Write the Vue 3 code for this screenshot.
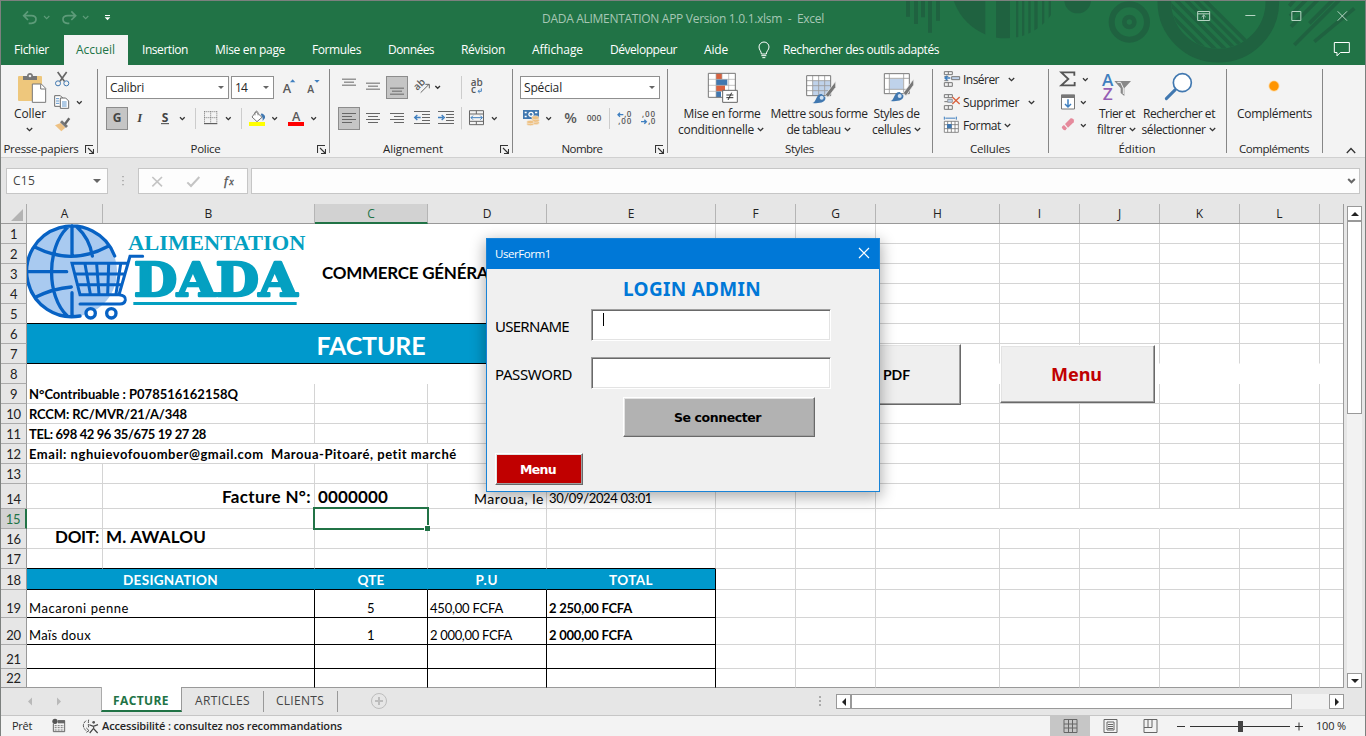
<script setup>
import { h } from 'vue'

// Stretches or tightens a label to its nominal width in pixels.
const vFit = {
  mounted(el, { value }) {
    const n = [...el.textContent].length
    el.style.letterSpacing = (value - el.getBoundingClientRect().width) / n + 'px'
  }
}

// Icon drawn on a 3x grid: the view box decides the rendered size.
const Ic = (props, { slots }) => {
  const [, , w, hh] = props.vb.split(' ').map(Number)
  return h('svg', { class: 'ic', viewBox: props.vb, width: w / 3, height: hh / 3 }, slots.default?.())
}
Ic.props = ['vb']
const Chev = () =>
  h('svg', { class: 'chev', width: 7, height: 5, viewBox: '0 0 7 5' }, [
    h('path', { d: 'M.8 1 3.5 3.7 6.2 1', fill: 'none', stroke: '#333', 'stroke-width': 1.3 })
  ])
const Launch = () =>
  h('svg', { class: 'launch', width: 9, height: 9, viewBox: '0 0 9 9' }, [
    h('path', { d: 'M.5 8V.5H8M3 3l5 5M8.5 4v4.5H4', fill: 'none', stroke: '#333', 'stroke-width': 1.1 })
  ])

const tabs = [
  ['Fichier', 35], ['Accueil', 39], ['Insertion', 46], ['Mise en page', 70], ['Formules', 49],
  ['Données', 46], ['Révision', 44], ['Affichage', 51], ['Développeur', 67], ['Aide', 24]
]

const colW = [76, 212, 113, 119, 169, 80, 80, 124, 80, 80, 80, 80, 24]
const cols = 'ABCDEFGHIJKL'.split('')
const heights = [20, 20, 20, 20, 20, 20, 20, 20, 20, 20, 20, 20, 20, 25, 20, 20, 20, 21, 28, 27, 24, 19]
const sum = (a, b) => colW.slice(a, b).reduce((x, y) => x + y, 0)

// Left block of every row: [columns spanned, classes, text, text width]
const left = {
  1: [[5, 'nb']], 2: [[5, 'nb']], 4: [[5, 'nb']], 5: [[5, 'blk-b']],
  3: [[2, 'nb nr'], [3, 'nb big', 'COMMERCE GÉNÉRAL', 175]],
  6: [[5, 'blue nb']], 7: [[5, 'blue blk-b ctr huge', 'FACTURE', 109]],
  8: [[5, 'nb nr']],
  9: [[2, 'b', 'N°Contribuable : P078516162158Q', 209], [1], [1], [1]],
  10: [[2, 'b', 'RCCM: RC/MVR/21/A/348', 158], [1], [1], [1]],
  11: [[2, 'b', 'TEL: 698 42 96 35/675 19 27 28', 177], [1], [1], [1]],
  12: [[4, 'b', 'Email: nghuievofouomber@gmail.com  Maroua-Pitoaré, petit marché', 428], [1]],
  14: [[1], [1, 'rt lg', 'Facture N°:', 89], [1, 'lg', '0000000', 70], [1, 'rt md', 'Maroua, le', 70], [1, 'dte', '30/09/2024 03:01', 103]],
  15: [[1], [1], [1, 'sel'], [1], [1]],
  16: [[1, 'rt lg', 'DOIT:', 44], [1, 'lg', 'M. AWALOU', 100], [1], [1], [1]],
  17: [[1, 'blk-b'], [1, 'blk-b'], [1, 'blk-b'], [1, 'blk-b'], [1, 'blk-b']],
  18: [[2, 'hd', 'DESIGNATION', 95], [1, 'hd', 'QTE', 27], [1, 'hd', 'P.U', 23], [1, 'hd blk-r', 'TOTAL', 44]],
  19: [[2, 'bk', 'Macaroni penne', 100], [1, 'bk ctr', '5', 8], [1, 'bk', '450,00 FCFA', 73], [1, 'bk b', '2 250,00 FCFA', 83]],
  20: [[2, 'bk', 'Maïs doux', 62], [1, 'bk ctr', '1', 8], [1, 'bk', '2 000,00 FCFA', 82], [1, 'bk b', '2 000,00 FCFA', 83]],
  21: [[2, 'bk'], [1, 'bk'], [1, 'bk'], [1, 'bk']],
  22: [[2, 'bk'], [1, 'bk'], [1, 'bk'], [1, 'bk']]
}
const rows = heights.map((height, i) => {
  const n = i + 1
  const cells = []
  let c = 0
  for (const [span, cls = '', text, tw] of left[n] || [[1], [1], [1], [1], [1]]) {
    cells.push({ w: sum(c, c + span), cls, text, tw })
    c += span
  }
  for (; c < 13; c++) {
    let cls = ''
    if (n === 7) cls = 'nb'
    if (n === 8) cls = 'nb nr'
    if (n === 15 && c >= 7 && c <= 10) cls = 'nr'
    cells.push({ w: colW[c], cls })
  }
  return { n, height, cells }
})
</script>

<template>
  <div class="app">
    <header class="top">
      <svg class="deco" viewBox="0 0 1380 195" width="460" height="65">
        <defs>
          <clipPath id="c1"><circle cx="300" cy="-50" r="165" /></clipPath>
          <clipPath id="c2"><circle cx="937" cy="5" r="141" /></clipPath>
        </defs>
        <path d="M0 0h12v50H0zM24 0h12v72H24zM45 0h12v52H45zM66 0h12v98H66zM90 0h12v62H90z" />
        <path clip-path="url(#c1)" d="M130 0h108v130H130zM270 0h42v130h-42zM330 0h7v130h-7zM348 0h7v130h-7zM367 0h7v130h-7zM385 0h10v130h-10zM408 0h7v130h-7zM428 0h7v130h-7z" />
        <circle cx="515" cy="0" r="40" />
        <g class="ln">
          <circle cx="670" cy="66" r="53" stroke-width="18" />
          <circle cx="670" cy="66" r="15" stroke-width="14" />
          <circle cx="937" cy="5" r="162" stroke-width="41" />
          <path clip-path="url(#c2)" stroke-width="11" d="M780 0 930 150M810 0 960 150M840 0l150 150M868 0l140 140M896 0l140 140M780 30l130 130" />
          <path stroke-width="11" d="M1165 0 1150 18M1200 0 1152 48M1235 0 1155 80M1300 0 1165 135M1345 25 1225 125M1280 0 1210 70" />
        </g>
      </svg>
      <div class="titlebar">
        <Ic vb="3 0 360 96" class="qat">
          <g fill="none" stroke="#5d9b79" stroke-width="5">
            <path d="M84 34 71 47 84 60M72 47H94Q108 47 108 58T94 70H86" />
            <path d="M214 34 227 47 214 60M226 47H204Q189 47 189 58T202 70H208" />
            <path d="M132 48l8 8 8-8M249 48l8 8 8-8" stroke-width="3.5" />
          </g>
          <path d="M315 45h15v3h-15zM314 52h17l-8.500 9z" fill="#fff" />
        </Ic>
        <span class="ttl"><span v-fit="282" class="t">DADA ALIMENTATION APP Version 1.0.1.xlsm&nbsp; -&nbsp; Excel</span></span>
        <Ic vb="860 0 520 96" class="wc">
          <g fill="none" stroke="#b8d6c5" stroke-width="3">
            <path d="M874 34.500h36v27h-36zM874 41.500h36M892 58V46M886 51l6-6 6 6M1017 46.500h30M1156.500 34.500h27v27h-27zM1294 34l28 28M1322 34l-28 28" />
          </g>
        </Ic>
      </div>
      <nav class="tabs">
        <span v-for="(t, i) in tabs" :key="t[0]" class="tab" :class="{ on: i === 1 }"><span v-fit="t[1]" class="t">{{ t[0] }}</span></span>
        <Ic vb="908 105 39 90" class="bulb">
          <path d="M921 162c0-9-7-12-7-21a15 15 0 0 1 30 0c0 9-8 12-8 21zM921 167h15M924 173h9" fill="none" stroke="#fff" stroke-width="3" />
        </Ic>
        <span v-fit="156" class="t">Rechercher des outils adaptés</span>
        <Ic vb="1275 105 72 90" class="cmt">
          <path d="M1285 127.500h45v30h-27l-10 10v-10h-8z" fill="none" stroke="#fff" stroke-width="3" />
        </Ic>
      </nav>
    </header>

    <section class="ribbon">
      <div class="grp g1">
        <div class="body cols">
          <div class="bigbtn w49">
            <Ic vb="3 204 147 114">
              <rect x="54" y="228" width="72" height="75" rx="3" fill="#eec77c" />
              <path d="M69 228h12c0-12 18-12 18 0h12v12H69z" fill="#777" /><circle cx="90" cy="228" r="4" fill="#eee" />
              <path d="M97 252h27l13 13v42H97z" fill="#fff" stroke="#777" stroke-width="3" /><path d="M122 253v14h14" fill="none" stroke="#777" stroke-width="3" />
            </Ic>
            <span v-fit="32" class="t">Coller</span>
            <span class="l2"><Chev /></span>
          </div>
          <div class="stack">
            <Ic vb="150 204 141 69">
              <path d="M173 216l20 28M200 216l-20 28" stroke="#666" stroke-width="5" /><circle cx="174" cy="250" r="7.500" fill="none" stroke="#4178b0" stroke-width="3" /><circle cx="199" cy="250" r="7.500" fill="none" stroke="#4178b0" stroke-width="3" />
            </Ic>
            <Ic vb="150 273 141 69">
              <g fill="#fff" stroke="#6a6a6a" stroke-width="3"><path d="M164 287h17l8 8v24h-25z" /><path d="M181 294h16l9 9v22h-25z" /></g>
              <path d="M168 296h9M168 303h10M168 310h10M186 306h14M186 312h14M186 318h14" stroke="#3f7fbf" stroke-width="2.500" />
              <path d="M231 304l7 7 7-7" fill="none" stroke="#333" stroke-width="4" />
            </Ic>
            <Ic vb="150 342 141 69">
              <path d="M165 376l17-7 14 14-12 11z" fill="#eec183" /><path d="M180 367l6-6 18 17-6 6z" fill="#777" /><path d="M195 372l13-17" stroke="#666" stroke-width="7" />
            </Ic>
          </div>
        </div>
        <div class="lbl"><span class="c"><span v-fit="75" class="t">Presse-papiers</span></span><Launch /></div>
      </div>

      <div class="grp g2">
        <div class="body lines">
          <div class="line pl8">
            <div class="combo cf"><span v-fit="34" class="t">Calibri</span><i class="tri"></i></div>
            <div class="combo cs"><span v-fit="12" class="t">14</span><i class="tri"></i></div>
            <Ic vb="822 229 165 69">
              <text x="848" y="279" font-size="38" class="gl">A</text><path d="M870 248l8-9 8 9z" fill="#3f7fbf" />
              <text x="922" y="279" font-size="31" class="gl">A</text><path d="M943 241l8 8 8-8z" fill="#3f7fbf" />
            </Ic>
          </div>
          <div class="line pl8">
            <div class="press bold">G</div>
            <Ic vb="384 321 201 69">
              <text x="412" y="366" font-size="38" font-style="italic" class="gs">I</text>
              <text x="485" y="366" font-size="36" class="gb">S</text><path d="M483 371h24" stroke="#444" stroke-width="3" />
              <path d="M540 352l7 7 7-7" fill="none" stroke="#333" stroke-width="4" />
            </Ic>
            <Ic vb="585 321 138 69">
              <path d="M586.500 324v63" stroke="#ccc" stroke-width="3" />
              <path d="M613 335h38M613 353h38M613.500 334v34M632 334v34M650.500 334v34" stroke="#777" stroke-width="3" stroke-dasharray="3 3" /><path d="M612 371h40" stroke="#444" stroke-width="3" />
              <path d="M678 352l7 7 7-7" fill="none" stroke="#333" stroke-width="4" />
            </Ic>
            <Ic vb="723 321 264 69">
              <path d="M724.500 324v63" stroke="#ccc" stroke-width="3" />
              <path d="M768 335l18 17-15 13-15-14z" fill="#fff" stroke="#777" stroke-width="3" /><path d="M765 346v-8q5-10 9 0v8" fill="none" stroke="#777" stroke-width="2.500" />
              <path d="M785 340q12 5 10 14l-7 9q1-14-6-18z" fill="#4178b0" /><path d="M747 366h48v12h-48z" fill="#ff0" />
              <path d="M817 352l7 7 7-7M934 352l7 7 7-7" fill="none" stroke="#333" stroke-width="4" />
              <text x="876" y="364" font-size="38" class="gl">A</text><path d="M864 366h48v12h-48z" fill="red" />
            </Ic>
          </div>
        </div>
        <div class="lbl"><span class="c"><span v-fit="30" class="t">Police</span></span><Launch /></div>
      </div>

      <div class="grp g3">
        <div class="body lines">
          <div class="line">
            <Ic vb="990 229 168 69"><path class="al" d="M1026 238.500h42M1032 247.500h30M1026 256.500h42M1098 250.500h42M1104 259.500h30M1098 268.500h42" /></Ic>
            <div class="press"><Ic vb="1161 232 60 63"><path class="al" d="M1170 265.500h42M1176 274.500h30M1170 283.500h42" /></Ic></div>
            <Ic vb="1224 229 156 69">
              <text x="0" y="0" font-size="30" class="gl" transform="translate(1252 274) rotate(-45)">ab</text>
              <path d="M1262 279l25-25M1276 254h12v12" fill="none" stroke="#666" stroke-width="3" />
              <path d="M1306 259l7 7 7-7" fill="none" stroke="#333" stroke-width="4" />
            </Ic>
            <Ic vb="15 229 152 69">
              <path d="M19.500 229v69" stroke="#ccc" stroke-width="3" />
              <text x="47" y="260" font-size="30" class="gl">ab</text><text x="48" y="281" font-size="30" class="gl">c</text>
              <path d="M79 266v9h-9M74 270l-5 5 5 5" fill="none" stroke="#3f7fbf" stroke-width="3" />
            </Ic>
          </div>
          <div class="line">
            <Ic vb="990 321 24 69" />
            <div class="press"><Ic vb="1017 324 60 63"><path class="al" d="M1026 340.500h42M1026 349.500h30M1026 358.500h42M1026 367.500h30" /></Ic></div>
            <Ic vb="1080 321 300 69">
              <path class="al" d="M1098 340.500h42M1104 349.500h30M1098 358.500h42M1104 367.500h30M1170 340.500h42M1182 349.500h30M1170 358.500h42M1182 367.500h30M1242 334.500h48M1266 343.500h24M1266 352.500h24M1266 361.500h24M1242 370.500h48M1314 334.500h48M1338 343.500h24M1338 352.500h24M1338 361.500h24M1314 370.500h48" />
              <path d="M1262 352.500h-15M1252 345l-8 7.500 8 7.500M1314 352.500h15M1325 345l8 7.500-8 7.500" fill="none" stroke="#3f7fbf" stroke-width="4" />
            </Ic>
            <Ic vb="15 321 152 69">
              <path d="M19.500 321v67" stroke="#ccc" stroke-width="3" />
              <path d="M43.500 332h42v42h-42zM43 342h42M43 364h42M64 332v10M64 364v10" fill="none" stroke="#666" stroke-width="3" />
              <path d="M48 353h34M54 347l-6 6 6 6M76 347l6 6-6 6" fill="none" stroke="#3f7fbf" stroke-width="3" />
              <path d="M111 352l7 7 7-7" fill="none" stroke="#333" stroke-width="4" />
            </Ic>
          </div>
        </div>
        <div class="lbl"><span class="c"><span v-fit="60" class="t">Alignement</span></span><Launch /></div>
      </div>

      <div class="grp g4">
        <div class="body lines">
          <div class="line pl7"><div class="combo cn"><span v-fit="38" class="t">Spécial</span><i class="tri"></i></div></div>
          <div class="line">
            <Ic vb="174 321 123 69">
              <path d="M204 330h48v27h-48z" fill="#4178b0" /><circle cx="228" cy="343" r="8" fill="#fff" /><circle cx="228" cy="343" r="4" fill="#4178b0" /><path d="M209 335h6v5h-6zM240 335h7v5h-7zM209 347h6v5h-6z" fill="#fff" />
              <g fill="#eec183" stroke="#f3f3f3" stroke-width="1.5"><ellipse cx="240" cy="368" rx="13" ry="6" /><ellipse cx="241" cy="361" rx="12" ry="6" /><ellipse cx="241" cy="353" rx="11" ry="6" /><ellipse cx="226" cy="372" rx="11" ry="5" /><ellipse cx="226" cy="366" rx="11" ry="5" /></g>
              <path d="M274 352l7 7 7-7" fill="none" stroke="#333" stroke-width="4" />
            </Ic>
            <Ic vb="297 321 165 69">
              <text x="328" y="370" font-size="42" textLength="38" lengthAdjust="spacingAndGlyphs" class="gl">%</text>
              <text x="395" y="363" font-size="29" textLength="44" lengthAdjust="spacingAndGlyphs" class="gl">000</text>
            </Ic>
            <Ic vb="462 321 174 69">
              <path d="M463.500 324v63" stroke="#ccc" stroke-width="3" />
              <text x="508" y="351" font-size="24" class="gl" textLength="21">,0</text><text x="490" y="372" font-size="24" class="gl" textLength="39">,00</text>
              <text x="561" y="351" font-size="24" class="gl" textLength="39">,00</text><text x="580" y="372" font-size="24" class="gl" textLength="21">,0</text>
              <path d="M505 344h-15M495 338l-6 6 6 6M558 365h15M568 359l6 6-6 6" fill="none" stroke="#3f7fbf" stroke-width="4" />
            </Ic>
          </div>
        </div>
        <div class="lbl"><span class="c"><span v-fit="41" class="t">Nombre</span></span><Launch /></div>
      </div>

      <div class="grp g5">
        <div class="body cols">
          <div class="bigbtn w100">
            <Ic vb="639 204 300 114">
              <path d="M760 220h81v72h-81z" fill="#fff" /><path d="M783 220h18v18h-18zM783 256h27v18h-27z" fill="#d9623f" /><path d="M783 238h34v18h-34zM783 274h15v18h-15z" fill="#4178b0" />
              <path d="M760 238h81M760 256h81M760 274h81M783 220v72M801 220v18M821 220v72" stroke="#aaa" stroke-width="2" fill="none" /><path d="M760 220h81v72h-81z" fill="none" stroke="#777" stroke-width="3" />
              <path d="M803 271h44v36h-44z" fill="#fff" stroke="#666" stroke-width="3" /><path d="M814 285h21M814 293h21M830 278l-11 22" stroke="#333" stroke-width="3" />
            </Ic>
            <span class="r7"><span v-fit="77" class="t">Mise en forme</span></span>
            <span class="l2 r6"><span v-fit="76" class="t">conditionnelle</span><Chev /></span>
          </div>
          <div class="bigbtn w102">
            <Ic vb="939 204 306 114">
              <path d="M1055 227h72v60h-72z" fill="#fff" /><path d="M1073 242h54v45h-54z" fill="#bfd2ea" />
              <path d="M1055 242h72M1055 257h72M1055 272h72M1073 227v60M1091 227v60M1109 227v60" stroke="#999" stroke-width="2.500" /><path d="M1055 227h72v60h-72z" fill="none" stroke="#777" stroke-width="3" />
              <path d="M1111 284l31-40v18l-23 30z" fill="#777" stroke="#f3f3f3" stroke-width="2" /><path d="M1072 309c14-2 9-27 28-27l11 10c3 16-18 19-39 17z" fill="#4178b0" /><circle cx="1100" cy="293" r="6" fill="#cfe0f2" />
            </Ic>
            <span v-fit="97" class="t">Mettre sous forme</span>
            <span class="l2"><span v-fit="54" class="t">de tableau</span><Chev /></span>
          </div>
          <div class="bigbtn w62">
            <Ic vb="1245 204 186 114">
              <path d="M1288 221h75v60h-75z" fill="#fff" stroke="#777" stroke-width="3" /><path d="M1304 237h40v30h-40z" fill="#bfd2ea" /><path d="M1288 235h75M1288 268h75M1303 221v60M1346 221v60" stroke="#999" stroke-width="2.500" />
              <path d="M1345 279l31-42v18l-23 32z" fill="#777" stroke="#f3f3f3" stroke-width="2" /><path d="M1306 303c14-2 9-27 28-27l11 10c3 16-18 19-39 17z" fill="#4178b0" /><circle cx="1334" cy="288" r="6" fill="#cfe0f2" />
            </Ic>
            <span class="k8"><span v-fit="46" class="t">Styles de</span></span>
            <span class="l2 k8"><span v-fit="39" class="t">cellules</span><Chev /></span>
          </div>
        </div>
        <div class="lbl"><span class="c"><span v-fit="29" class="t">Styles</span></span></div>
      </div>

      <div class="grp g6">
        <div class="body stack">
          <div class="cmd">
            <Ic vb="81 204 90 69">
              <path d="M115 215h24v9h-24zM115 248h24v11h-24zM127 215v9M127 248v11M115 230h12M115 242h12" fill="none" stroke="#777" stroke-width="3" /><path d="M137 230h24v9h-24z" fill="#bfd2ea" stroke="#777" stroke-width="3" /><path d="M133 234h-15M124 227l-7 7 7 7" fill="none" stroke="#3f7fbf" stroke-width="4" />
            </Ic>
            <span v-fit="36" class="t">Insérer</span><Chev class="a9" />
          </div>
          <div class="cmd">
            <Ic vb="81 273 90 69">
              <path d="M115 284h24v9h-24zM115 317h24v11h-24zM127 284v9M127 317v11M115 305h10" fill="none" stroke="#777" stroke-width="3" /><path d="M125 298h14v9h-14z" fill="#bfd2ea" stroke="#777" stroke-width="2" /><path d="M139 291l22 21M161 291l-22 21" stroke="#d9623f" stroke-width="4" />
            </Ic>
            <span v-fit="56" class="t">Supprimer</span><Chev class="a9" />
          </div>
          <div class="cmd">
            <Ic vb="81 342 90 69">
              <path d="M115 364h42v33h-42zM115 374h42M115 386h42M125 364v33M136 364v33M147 364v33" fill="#fff" stroke="#777" stroke-width="2.500" /><path d="M123 372h14v13h-14z" fill="#4178b0" /><path d="M115 350v9M151 350v9M118 354.500h30" stroke="#3f7fbf" stroke-width="3" />
            </Ic>
            <span v-fit="38" class="t">Format</span><Chev class="a3" />
          </div>
        </div>
        <div class="lbl"><span class="c"><span v-fit="40" class="t">Cellules</span></span></div>
      </div>

      <div class="grp g7">
        <div class="body cols">
          <div class="stack">
            <Ic vb="429 204 138 69"><path d="M505 227v-10h-39l21 20-21 19h40v-10" fill="none" stroke="#555" stroke-width="5.500" /><path d="M531 235l7 7 7-7" fill="none" stroke="#333" stroke-width="4" /></Ic>
            <Ic vb="429 273 138 69"><path d="M466.500 285h39v42h-39z" fill="#fff" stroke="#777" stroke-width="3" /><path d="M465 284h42v10h-42z" fill="#777" /><path d="M486 298v22M477 312l9 9 9-9" fill="none" stroke="#3f7fbf" stroke-width="4.500" /><path d="M525 304l7 7 7-7" fill="none" stroke="#333" stroke-width="4" /></Ic>
            <Ic vb="429 342 138 69"><path d="M477 372l17-17q4-2 8 3t1 9l-17 16z" fill="#e58a9c" /><path d="M474 375l9 10-4 5q-4 2-9-3t-1-8z" fill="#e58a9c" /><path d="M525 373l7 7 7-7" fill="none" stroke="#333" stroke-width="4" /></Ic>
          </div>
          <div class="bigbtn w44">
            <Ic vb="567 204 132 114"><text x="588" y="258" font-size="46" textLength="34" lengthAdjust="spacingAndGlyphs" fill="#3f7fbf" class="az">A</text><text x="590" y="299" font-size="46" textLength="30" lengthAdjust="spacingAndGlyphs" fill="#955fb5" class="az">Z</text><path d="M625 243h50l-20 22v23l-11-9v-14z" fill="#888" /><path d="M634 247h10l8 17v18" fill="none" stroke="#f3f3f3" stroke-width="3" /></Ic>
            <span v-fit="36" class="t">Trier et</span>
            <span class="l2"><span v-fit="29" class="t">filtrer</span><Chev /></span>
          </div>
          <div class="bigbtn w80">
            <Ic vb="699 204 240 114"><path d="M781 296l27-27" stroke="#4178b0" stroke-width="9" stroke-linecap="round" /><circle cx="829" cy="248" r="27" fill="#fff" stroke="#4178b0" stroke-width="5" /></Ic>
            <span v-fit="72" class="t">Rechercher et</span>
            <span class="l2"><span v-fit="64" class="t">sélectionner</span><Chev /></span>
          </div>
        </div>
        <div class="lbl"><span class="c"><span v-fit="37" class="t">Édition</span></span></div>
      </div>

      <div class="grp g8">
        <div class="body cols">
          <div class="bigbtn w95">
            <Ic vb="963 204 285 114"><circle cx="1104" cy="258" r="16.500" fill="#ffd699" /><circle cx="1104" cy="258" r="14" fill="#ff9500" /></Ic>
            <span v-fit="75" class="t">Compléments</span>
          </div>
        </div>
        <div class="lbl"><span class="c"><span v-fit="70" class="t">Compléments</span></span></div>
      </div>
      <svg class="collapse" width="10" height="7" viewBox="0 0 10 7"><path d="M.8 6 5 1.500 9.200 6" fill="none" stroke="#333" stroke-width="1.300" /></svg>
    </section>

    <section class="fbar">
      <div class="fbox nm"><span v-fit="22" class="t">C15</span><i class="tri"></i></div>
      <Ic vb="324 25 90 78"><path d="M367 49h4v4h-4zM367 61h4v4h-4zM367 73h4v4h-4z" fill="#999" /></Ic>
      <div class="fbox fn">
        <Ic vb="417 27 324 72">
          <path d="M457 51l29 28M486 51l-29 28" stroke="#c4c4c4" stroke-width="5" /><path d="M562 67l11 11 25-27" fill="none" stroke="#c4c4c4" stroke-width="6" />
          <text x="672" y="74" font-size="40" class="fx">f</text><text x="688" y="76" font-size="30" class="fx">x</text>
        </Ic>
      </div>
      <div class="fbox fm"><svg width="9" height="6" viewBox="0 0 9 6"><path d="M1.200 1 4.500 4.300 7.800 1" fill="none" stroke="#666" stroke-width="2" /></svg></div>
    </section>

    <section class="work">
      <div class="sheet">
        <div class="hrow">
          <div class="corner"><i></i></div>
          <div v-for="(c, i) in cols" :key="c" class="hc" :class="{ on: c === 'C' }" :style="{ width: colW[i] + 'px' }">{{ c }}</div>
        </div>
        <div v-for="r in rows" :key="r.n" class="row" :style="{ height: r.height + 'px' }">
          <div class="rh" :class="{ on: r.n === 15 }">{{ r.n }}</div>
          <div v-for="(c, i) in r.cells" :key="i" class="cell" :class="c.cls" :style="{ width: c.w + 'px' }">
            <span v-if="c.text" v-fit="c.tw" class="t">{{ c.text }}</span>
          </div>
        </div>

        <svg class="logo" viewBox="81 192 840 294" width="280" height="98">
          <circle cx="216" cy="335" r="135" fill="#a9caf0" />
          <g fill="none" stroke="#0762c4" stroke-width="10" stroke-linecap="round">
            <path d="M344 288A136 136 0 1 0 240 468M216 197v90M216 398v72M202 203C140 262 138 408 202 468M230 200C258 225 272 255 277 288M84 335H200M106 262Q216 318 326 258M106 412Q160 385 214 381" />
            <path d="M428 289H390L357 404H240L216 310H383M357 404Q378 406 376 420 374 432 360 432H240M255 312l16 90M290 312l7 90M326 312l-3 90M362 312l-14 90M224 342H373M232 374H364" stroke-width="9" />
            <circle cx="272" cy="460" r="14" fill="#fff" /><circle cx="334" cy="460" r="14" fill="#fff" />
          </g>
          <text x="384" y="269" textLength="532" lengthAdjust="spacingAndGlyphs" class="lg1">ALIMENTATION</text>
          <text x="402" y="409" textLength="490" lengthAdjust="spacingAndGlyphs" class="lg2">DADA</text>
          <path d="M400 426h490v9H400z" fill="#04a0c1" />
        </svg>
        <div class="obj pdf"><span v-fit="27" class="t">PDF</span></div>
        <div class="obj menu"><span v-fit="51" class="t">Menu</span></div>
        <div class="pick"></div>
      </div>
      <div class="vs">
        <div class="sb"><i class="up"></i></div>
        <div class="vthumb"></div>
        <div class="vtrack"></div>
        <div class="sb"><i class="dn"></i></div>
      </div>
    </section>

    <section class="sheets">
      <svg class="nav" width="100" height="26" viewBox="0 0 100 26"><path d="M31 9.500v8l-4-4zM56 9.500v8l4-4z" fill="#b9b9b9" /></svg>
      <div class="st on"><span v-fit="56" class="t">FACTURE</span></div>
      <div class="st s2"><span v-fit="55" class="t">ARTICLES</span></div>
      <div class="st s3"><span v-fit="48" class="t">CLIENTS</span></div>
      <svg class="plus" width="18" height="18" viewBox="0 0 18 18"><circle cx="9" cy="9" r="7.500" fill="none" stroke="#bdbdbd" /><path d="M5 9h8M9 5v8" stroke="#bdbdbd" stroke-width="2" /></svg>
      <svg class="dots" width="4" height="14" viewBox="0 0 4 14"><path d="M1 2h2v2H1zM1 6h2v2H1zM1 10h2v2H1z" fill="#aaa" /></svg>
      <div class="hsb">
        <div class="sb"><i class="lf"></i></div>
        <div class="hthumb"></div>
        <div class="htrack"></div>
        <div class="sb"><i class="rg"></i></div>
      </div>
    </section>

    <footer class="status">
      <span v-fit="20" class="t pr">Prêt</span>
      <Ic vb="135 648 171 60">
        <path d="M160 671v24h34v-33h-20" fill="none" stroke="#666" stroke-width="3" /><path d="M174 661h21v9h-21z" fill="#666" /><circle cx="165" cy="664" r="8" fill="#555" /><path d="M164 677h28M164 683h28M164 690h28" stroke="#777" stroke-width="3" stroke-dasharray="6 3" />
        <path d="M258 662q-16 14 0 30M266 659q-2 12 0 24" fill="none" stroke="#555" stroke-width="3" stroke-dasharray="10 3" /><path d="M259 684l8 8-8 5" fill="none" stroke="#555" stroke-width="3" />
        <circle cx="281" cy="667" r="4" fill="#555" /><path d="M268 674l12 5 14-5M281 678v8l12 13M280 686l-11 13" fill="none" stroke="#444" stroke-width="3.500" />
      </Ic>
      <span v-fit="240" class="t acc">Accessibilité : consultez nos recommandations</span>
      <div class="right">
        <div class="vw on"><svg width="15" height="14" viewBox="0 0 15 14"><path d="M1 .5h13v13H1zM1 5h13M1 9h13M5.500 0v14M9.500 0v14" /></svg></div>
        <div class="vw"><svg width="15" height="14" viewBox="0 0 15 14"><path d="M1 .5h13v13H1zM4 3h7v8H4zM5 5.500h5M5 7.500h5M5 9.500h5" /></svg></div>
        <div class="vw"><svg width="15" height="14" viewBox="0 0 15 14"><path d="M1 .5h13v13H1zM1 8.500h8v-8M5 .5v8" /></svg></div>
        <svg class="zoom" width="137" height="20" viewBox="1170 716 137 20"><path d="M1177 726.500h8M1190 726.500h100M1295 726.500h8M1299 722.500v8" stroke="#333" fill="none" /><path d="M1238 721h5v11h-5z" fill="#444" /></svg>
        <span v-fit="30" class="t">100 %</span>
      </div>
    </footer>

    <div class="dlg">
      <div class="dt"><span v-fit="56" class="t">UserForm1</span><svg width="12" height="12" viewBox="0 0 12 12"><path d="M1 1l10 10M11 1 1 11" stroke="#fff" stroke-width="1.200" /></svg></div>
      <div class="dh"><span v-fit="138" class="t">LOGIN ADMIN</span></div>
      <div class="fld f1"><label><span v-fit="74" class="t">USERNAME</span></label><div class="inp"><i class="caret"></i></div></div>
      <div class="fld"><label><span v-fit="77" class="t">PASSWORD</span></label><div class="inp"></div></div>
      <div class="btn go"><span v-fit="87" class="t">Se connecter</span></div>
      <div class="btn mn"><span v-fit="36" class="t">Menu</span></div>
    </div>
  </div>
</template>

<style>
html, body { margin: 0; overflow: hidden; }
</style>

<style scoped>
.app { position: relative; box-sizing: border-box; width: 1366px; height: 736px; border: 1px solid #7c807e; border-bottom: 0; background: #e6e6e6; font: 12px/16px "Open Sans", "Noto Sans", sans-serif; color: #262626; overflow: hidden; display: flex; flex-direction: column; }
.app * { box-sizing: border-box; }
.t { display: inline-block; white-space: pre; flex: none; }
.ic, svg { display: block; flex: none; }

.top { position: relative; height: 64px; background: #217346; color: #fff; flex: none; }
.deco { position: absolute; right: -1px; top: -1px; fill: #1f6240; }
.deco .ln { fill: none; stroke: #1f6240; }
.titlebar { position: relative; height: 34px; display: flex; }
.titlebar .ic { margin-top: -1px; }
.ttl { width: 847px; padding: 10px 0 0 421px; color: #a6c7b5; }
.wc { margin-left: auto; }
.titlebar .wc { margin-right: -1px; }
.tabs { position: relative; height: 30px; display: flex; align-items: center; gap: 27px; padding-left: 13px; }
.tab.on { background: #f3f3f3; color: #217346; height: 30px; padding: 7px 13px 0 12px; margin: 0 -13px 0 -12px; }
.bulb { margin: 0 6px 0 2px; }
.bulb + .t { margin-left: -20px; }
.cmt { margin: 0 10px 0 auto; }

.ribbon { height: 93px; flex: none; display: flex; background: #f3f3f3; border-bottom: 1px solid #d0d0d0; }
.grp { height: 92px; display: flex; flex-direction: column; position: relative; }
.grp::after { content: ""; position: absolute; right: 0; top: 4px; width: 1px; height: 84px; background: #868686; }
.g1 { width: 97px; } .g2 { width: 232px; } .g3 { width: 183px; } .g4 { width: 155px; }
.g5 { width: 265px; } .g6 { width: 116px; } .g7 { width: 178px; } .g8 { width: 96px; }
.body { height: 76px; padding-top: 3px; }
.cols { display: flex; }
.stack { display: flex; flex-direction: column; }
.lines { display: flex; flex-direction: column; gap: 8px; padding-top: 11px; }
.line { display: flex; height: 23px; }
.pl8 { padding-left: 8px; } .pl7 { padding-left: 7px; }
.lbl { display: flex; height: 16px; font-size: 11.5px; }
.lbl .c { flex: 1; display: flex; justify-content: center; }
.g5 .c, .g6 .c, .g7 .c, .g8 .c { padding-right: 2px; }
.launch { margin: 4px 4px 0 4px; }
.bigbtn { display: flex; flex-direction: column; align-items: center; }
.w49 { width: 49px; } .w100 { width: 100px; } .w102 { width: 102px; } .w62 { width: 62px; }
.w44 { width: 44px; } .w80 { width: 80px; } .w95 { width: 95px; }
.w49 > .t { margin-right: -9px; }
.l2 { display: flex; align-items: center; gap: 3px; height: 15px; padding-right: 1px; }
.w49 .l2 { margin-right: -9px; }
.r7 { padding-left: 8px; } .r6 { padding-left: 7px; } .k8 { padding-right: 9px; }
.cmd { display: flex; align-items: center; height: 23px; }
.a9 { margin-left: 9px; } .a3 { margin-left: 3px; }
.combo { background: #fff; border: 1px solid #8f8f8f; display: flex; align-items: center; padding: 0 4px 0 3px; height: 23px; }
.tri { margin-left: auto; border: 3px solid transparent; border-top: 3px solid #666; border-bottom: 0; }
.cf { width: 123px; margin-right: 2px; } .cs { width: 43px; } .cn { width: 140px; }
.press { width: 22px; height: 23px; border: 1px solid #8c8c8c; background: #c5c5c5; flex: none; }
.bold { font: bold 12px/20px "Open Sans", sans-serif; text-align: center; color: #444; }
.gl { font-family: "Open Sans", sans-serif; font-weight: 600; fill: #595959; }
.gb { font-family: "Open Sans", sans-serif; font-weight: 700; fill: #444; }
.gs { font-family: "Liberation Serif", serif; font-weight: 700; fill: #444; }
.az { font-family: "Open Sans", sans-serif; font-weight: 600; }
.al { fill: none; stroke: #666; stroke-width: 3; }
.collapse { margin: 82px 0 0 23px; }

.fbar { height: 46px; flex: none; display: flex; padding: 10px 0 0 5px; }
.fbox { height: 26px; background: #fdfdfd; border: 1px solid #c6c6c6; display: flex; align-items: center; }
.nm { width: 102px; padding: 0 6px; color: #444; }
.nm .tri { border-width: 4px 4px 0; }
.fn { width: 110px; margin-right: 3px; }
.fm { width: 1109px; justify-content: flex-end; padding-right: 3px; }
.fx { font-family: "Liberation Serif", serif; font-style: italic; font-weight: 400; fill: #555; stroke: #555; }

.work { height: 484px; flex: none; display: flex; }
.sheet { position: relative; width: 1343px; background: #fff; overflow: hidden; font-family: Lato, "Open Sans", sans-serif; color: #000; font-size: 13px; border-right: 1px solid #9b9b9b; }
.hrow { display: flex; height: 20px; background: #e6e6e6; border-bottom: 1px solid #999; font: 12px/19px "Open Sans", sans-serif; color: #222; }
.corner { width: 26px; padding: 5px 3px 0 10px; border-right: 1px solid #ababab; }
.corner i { display: block; border-left: 12px solid transparent; border-bottom: 12px solid #b3b3b3; }
.hc { border-right: 1px solid #b5b5b5; text-align: center; height: 19px; }
.hc.on { background: #d2d2d2; color: #217346; height: 20px; border-bottom: 2px solid #217346; }
.row { display: flex; }
.rh { width: 26px; flex: none; background: #e6e6e6; border-right: 1px solid #999; border-bottom: 1px solid #ababab; display: flex; align-items: flex-end; justify-content: center; line-height: 18px; font-size: 13px; letter-spacing: -.3px; color: #222; }
.rh.on { background: #d2d2d2; color: #217346; border-right: 2px solid #217346; }
.cell { flex: none; border-right: 1px solid #d4d4d4; border-bottom: 1px solid #d4d4d4; display: flex; align-items: flex-end; padding-left: 2px; line-height: 18px; }
.nr { border-right-color: transparent; } .nb { border-bottom-color: transparent; }
.blk-b { border-bottom-color: #000; } .blk-r { border-right-color: #000; }
.blue { background: #0099cc; } .cell.blue.nb { border-bottom-color: #0099cc; }
.b { font-weight: 700; }
.ctr { justify-content: center; padding-left: 0; }
.rt { justify-content: flex-end; padding-right: 2px; }
.big { font-weight: 700; font-size: 17px; padding-left: 7px; line-height: 20px; }
.huge { font-weight: 700; font-size: 25px; color: #fff; line-height: 36px; }
.lg { font-weight: 700; font-size: 17px; line-height: 22px; padding-left: 3px; }
.lg.rt { padding-right: 3px; }
.md { font-size: 14px; line-height: 19px; }
.dte { line-height: 20px; }
.hd { background: #0099cc; color: #fff; font-weight: 700; font-size: 13.5px; border-bottom-color: #000; justify-content: center; padding-left: 0; }
.hd:not(.blk-r) { border-right-color: #0099cc; }
.bk { border-color: #000; }
.row:nth-child(23) .cell, .row:nth-child(23) .rh { border-bottom-color: #999; }
.logo { position: absolute; left: 26px; top: 20px; }
.lg1 { font: 700 66px "Liberation Serif", serif; fill: #04a0c1; }
.lg2 { font: 700 142px "DejaVu Serif", serif; fill: #04a0c1; stroke: #04a0c1; stroke-width: 8; stroke-linejoin: round; }
.obj { position: absolute; background: #efefef; border: 1px solid #fff; border-right: 1px solid #696969; border-bottom: 1px solid #696969; box-shadow: inset -1px -1px #a0a0a0, inset 1px 1px #e3e3e3; display: flex; align-items: center; font-weight: 700; }
.pdf { left: 800px; top: 140px; width: 160px; height: 61px; padding-left: 81px; font-size: 14px; }
.menu { left: 999px; top: 141px; width: 155px; height: 58px; justify-content: center; color: #c00000; font: 700 18px "Noto Sans", sans-serif; padding-right: 2px; }
.pick { position: absolute; left: 312px; top: 303px; width: 116px; height: 23px; border: 2px solid #217346; }
.pick::after { content: ""; position: absolute; right: -3px; bottom: -3px; width: 5px; height: 5px; background: #217346; border: 1px solid #fff; border-right: 0; border-bottom: 0; box-sizing: content-box; }
.vs { margin: 2px 0 0 3px; width: 15px; display: flex; flex-direction: column; height: 482px; }
.sb { width: 15px; height: 15px; border: 1px solid #999; background: #fff; display: flex; align-items: center; justify-content: center; flex: none; }
.vthumb { height: 193px; border: 1px solid #999; background: #fff; }
.vtrack { flex: 1; background: #f2f2f2; }
.up { border: 4px solid transparent; border-bottom-color: #222; border-top: 0; }
.dn { border: 4px solid transparent; border-top-color: #222; border-bottom: 0; }
.lf { border: 4px solid transparent; border-right-color: #222; border-left: 0; }
.rg { border: 4px solid transparent; border-left-color: #222; border-right: 0; }

.sheets { height: 27px; flex: none; display: flex; position: relative; }
.st { height: 21px; margin-top: 3px; color: #444; border-right: 1px solid #999; padding: 2px 0 0 13px; }
.st.on { margin-top: -1px; width: 81px; height: 25px; padding: 6px 0 0 11px; background: #fff; color: #217346; font-weight: 700; border-left: 1px solid #ababab; border-bottom: 2px solid #217346; }
.s2 { width: 82px; } .s3 { width: 74px; padding-left: 12px; }
.plus { margin: 4px 0 0 32px; }
.dots { margin: 6px 0 0 430px; }
.hsb { margin: 6px 0 0 14px; width: 508px; height: 15px; display: flex; }
.hthumb { width: 441px; border: 1px solid #999; background: #fff; }
.htrack { flex: 1; background: #f2f2f2; }

.status { height: 21px; flex: none; border-top: 1px solid #c6c6c6; background: #f3f3f3; display: flex; align-items: center; font-size: 11px; }
.pr { margin-left: 11px; }
.pr + .ic { margin-left: 13px; }
.acc { font-weight: 600; }
.right { margin-left: auto; display: flex; align-items: center; height: 20px; padding-right: 19px; }
.vw { width: 40px; height: 20px; display: flex; align-items: center; justify-content: center; }
.vw.on { background: #c6c6c6; }
.vw svg { fill: none; stroke: #666; stroke-width: 1; }
.zoom { margin-right: 9px; }

.dlg { position: absolute; left: 485px; top: 237px; width: 394px; height: 254px; background: #f0f0f0; border: 1px solid #1883d7; box-shadow: 0 4px 14px 1px rgba(0, 0, 0, .33); display: flex; flex-direction: column; color: #000; font-family: "Noto Sans", "Open Sans", sans-serif; }
.dt { height: 30px; background: #0078d7; color: #fff; display: flex; align-items: center; justify-content: space-between; padding: 0 9px 2px 8px; font: 11.5px "Open Sans", sans-serif; flex: none; }
.dh { height: 40px; padding-left: 136px; color: #0078d7; font: bold 19px/40px "Noto Sans", "Open Sans", sans-serif; }
.fld { display: flex; height: 31px; padding-left: 8px; margin-bottom: 8px; font-size: 15px; line-height: 34px; }
.f1 { margin-bottom: 17px; }
.fld label { width: 96px; }
.inp { width: 240px; height: 32px; background: #fff; border: 1px solid #a0a0a0; border-right-color: #fff; border-bottom-color: #fff; box-shadow: inset 1px 1px #696969, inset -1px -1px #e3e3e3; padding: 3px 0 0 11px; }
.caret { display: block; width: 1px; height: 13px; background: #000; }
.btn { display: flex; align-items: center; justify-content: center; flex: none; border: 1px solid #fff; border-right-color: #696969; border-bottom-color: #696969; font: bold 12.5px "DejaVu Sans", sans-serif; }
.go { width: 192px; height: 40px; margin: 1px 0 0 136px; background: #b2b2b2; box-shadow: inset -1px -1px #a0a0a0, inset 1px 1px #e3e3e3; padding-right: 3px; }
.mn { width: 88px; height: 32px; margin: 16px 0 0 8px; background: #c00000; color: #fff; box-shadow: inset -1px -1px #a0a0a0, inset 1px 1px #e3e3e3; padding-right: 2px; }
</style>
